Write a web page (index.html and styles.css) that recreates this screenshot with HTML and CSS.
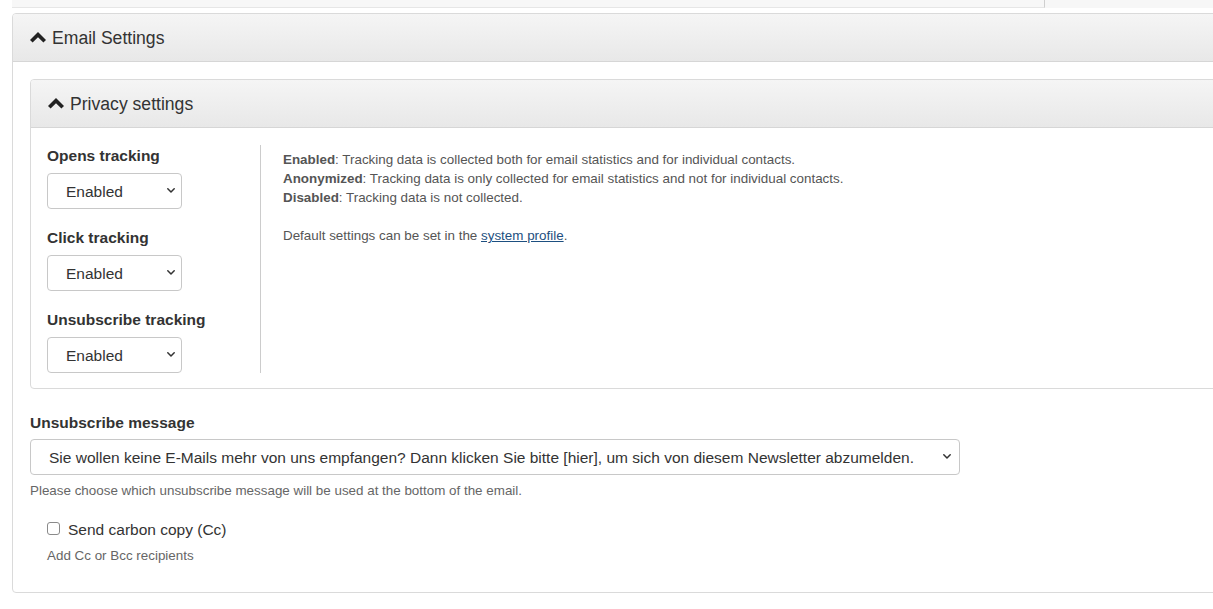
FILE: index.html
```html
<!DOCTYPE html>
<html lang="en">
<head>
<meta charset="utf-8">
<title>Email Settings</title>
<link rel="stylesheet" href="styles.css">
</head>
<body>
<div class="page">
  <div class="topbar">
    <div class="topbar-main"></div>
    <div class="topbar-side"></div>
  </div>

  <section class="panel panel-outer">
    <div class="panel-heading">
      <svg class="chev" viewBox="0 0 16 11" width="16" height="11"><polygon points="0,8 8,0 16,8 13.4,10.6 8,5.2 2.6,10.6"/></svg>
      <span class="panel-title">Email Settings</span>
    </div>
    <div class="panel-body outer-body">

      <section class="panel panel-inner">
        <div class="panel-heading">
          <svg class="chev" viewBox="0 0 16 11" width="16" height="11"><polygon points="0,8 8,0 16,8 13.4,10.6 8,5.2 2.6,10.6"/></svg>
          <span class="panel-title">Privacy settings</span>
        </div>
        <div class="privacy-body">
          <div class="tracking-col">
            <div class="field">
              <label class="field-label">Opens tracking</label>
              <div class="select-wrap small">
                <select class="select"><option>Enabled</option></select>
                <svg class="select-arrow" viewBox="0 0 8 5" width="8" height="5"><polyline points="0.8,0.8 4,4 7.2,0.8"/></svg>
              </div>
            </div>
            <div class="field">
              <label class="field-label">Click tracking</label>
              <div class="select-wrap small">
                <select class="select"><option>Enabled</option></select>
                <svg class="select-arrow" viewBox="0 0 8 5" width="8" height="5"><polyline points="0.8,0.8 4,4 7.2,0.8"/></svg>
              </div>
            </div>
            <div class="field">
              <label class="field-label">Unsubscribe tracking</label>
              <div class="select-wrap small">
                <select class="select"><option>Enabled</option></select>
                <svg class="select-arrow" viewBox="0 0 8 5" width="8" height="5"><polyline points="0.8,0.8 4,4 7.2,0.8"/></svg>
              </div>
            </div>
          </div>
          <div class="info-col">
            <p class="info"><b>Enabled</b>: Tracking data is collected both for email statistics and for individual contacts.<br>
            <b>Anonymized</b>: Tracking data is only collected for email statistics and not for individual contacts.<br>
            <b>Disabled</b>: Tracking data is not collected.</p>
            <p class="info">Default settings can be set in the <a href="#" class="link">system profile</a>.</p>
          </div>
        </div>
      </section>

      <div class="unsub">
        <label class="field-label">Unsubscribe message</label>
        <div class="select-wrap wide">
          <select class="select"><option>Sie wollen keine E-Mails mehr von uns empfangen? Dann klicken Sie bitte [hier], um sich von diesem Newsletter abzumelden.</option></select>
          <svg class="select-arrow" viewBox="0 0 8 5" width="8" height="5"><polyline points="0.8,0.8 4,4 7.2,0.8"/></svg>
        </div>
        <p class="help">Please choose which unsubscribe message will be used at the bottom of the email.</p>
      </div>

      <div class="cc">
        <label class="check-row"><input type="checkbox" class="check"><span>Send carbon copy (Cc)</span></label>
        <p class="help cc-help">Add Cc or Bcc recipients</p>
      </div>

    </div>
  </section>
</div>
</body>
</html>
```

FILE: styles.css
```css
html, body {
  margin: 0;
  padding: 0;
  background: #fff;
  overflow: hidden;
}

body {
  font-family: "Liberation Sans", Arial, Helvetica, sans-serif;
  color: #333;
}

.page {
  padding-left: 12px;
  width: 1231px;
}

.topbar {
  display: flex;
  height: 8px;
  width: 1201px;
}

.topbar-main {
  width: 1032px;
  background: #f7f7f7;
  border-bottom: 1px solid #e6e6e6;
  border-right: 1px solid #cfcfcf;
}

.topbar-side {
  flex: 1;
  background: #f7f7f7;
}

.panel {
  border: 1px solid #dadada;
  border-radius: 4px;
  background: #fff;
}

.panel-outer {
  margin-top: 5px;
}

.panel-heading {
  height: 47px;
  display: flex;
  align-items: center;
  gap: 6px;
  padding-left: 17px;
  background: linear-gradient(to bottom, #f5f5f5 0%, #e8e8e8 100%);
  border-bottom: 1px solid #d6d6d6;
  border-radius: 3px 3px 0 0;
}

.chev {
  fill: #222;
  flex: none;
}

.panel-title {
  font-size: 17.6px;
  color: #333;
  padding-top: 1px;
}

.outer-body {
  padding: 17px 0 28px 17px;
}

.privacy-body {
  display: flex;
  padding: 17px 16px 15px 16px;
}

.tracking-col {
  width: 213px;
  display: flex;
  flex-direction: column;
  gap: 18px;
}

.field {
  display: flex;
  flex-direction: column;
  align-items: flex-start;
}

.field-label {
  font-size: 15.5px;
  font-weight: bold;
  line-height: 21px;
  color: #333;
  margin-bottom: 7px;
}

.select-wrap {
  position: relative;
}

.select {
  appearance: none;
  -webkit-appearance: none;
  height: 36px;
  border: 1px solid #c8c8c8;
  border-radius: 4px;
  background: #fff;
  font-family: "Liberation Sans", Arial, Helvetica, sans-serif;
  font-size: 15.5px;
  color: #333;
  padding: 0 28px 0 18px;
  margin: 0;
  display: block;
  width: 100%;
}

.select-wrap.small {
  width: 135px;
}

.select-wrap.wide {
  width: 930px;
}

.select-arrow {
  position: absolute;
  top: 15px;
  right: 7px;
  fill: none;
  stroke: #333;
  stroke-width: 1.5;
  stroke-linecap: round;
  stroke-linejoin: round;
  pointer-events: none;
}

.wide .select-arrow {
  right: 9px;
}

.info-col {
  border-left: 1px solid #ccc;
  padding: 5px 0 0 22px;
}

.info {
  margin: 0 0 19px 0;
  font-size: 13.4px;
  line-height: 19px;
  color: #555;
}

.info b {
  color: #555;
}

.link {
  color: #1d4f80;
  text-decoration: underline;
}

.unsub {
  margin-top: 24px;
  display: flex;
  flex-direction: column;
  align-items: flex-start;
}

.unsub .field-label {
  line-height: 20px;
  margin-bottom: 6px;
}

.help {
  margin: 8px 0 0 0;
  font-size: 13.4px;
  line-height: 16px;
  color: #666;
}

.cc {
  padding-left: 17px;
  margin-top: 21px;
}

.check-row {
  display: flex;
  align-items: center;
  gap: 8px;
  font-size: 15.5px;
  line-height: 20px;
  color: #333;
}

.check {
  appearance: none;
  -webkit-appearance: none;
  width: 13px;
  height: 13px;
  margin: -4px 0 0 0;
  border: 1px solid #8a8a8a;
  border-radius: 3px;
  background: #fff;
  flex: none;
}

.cc-help {
  margin-top: 8px;
}
```
